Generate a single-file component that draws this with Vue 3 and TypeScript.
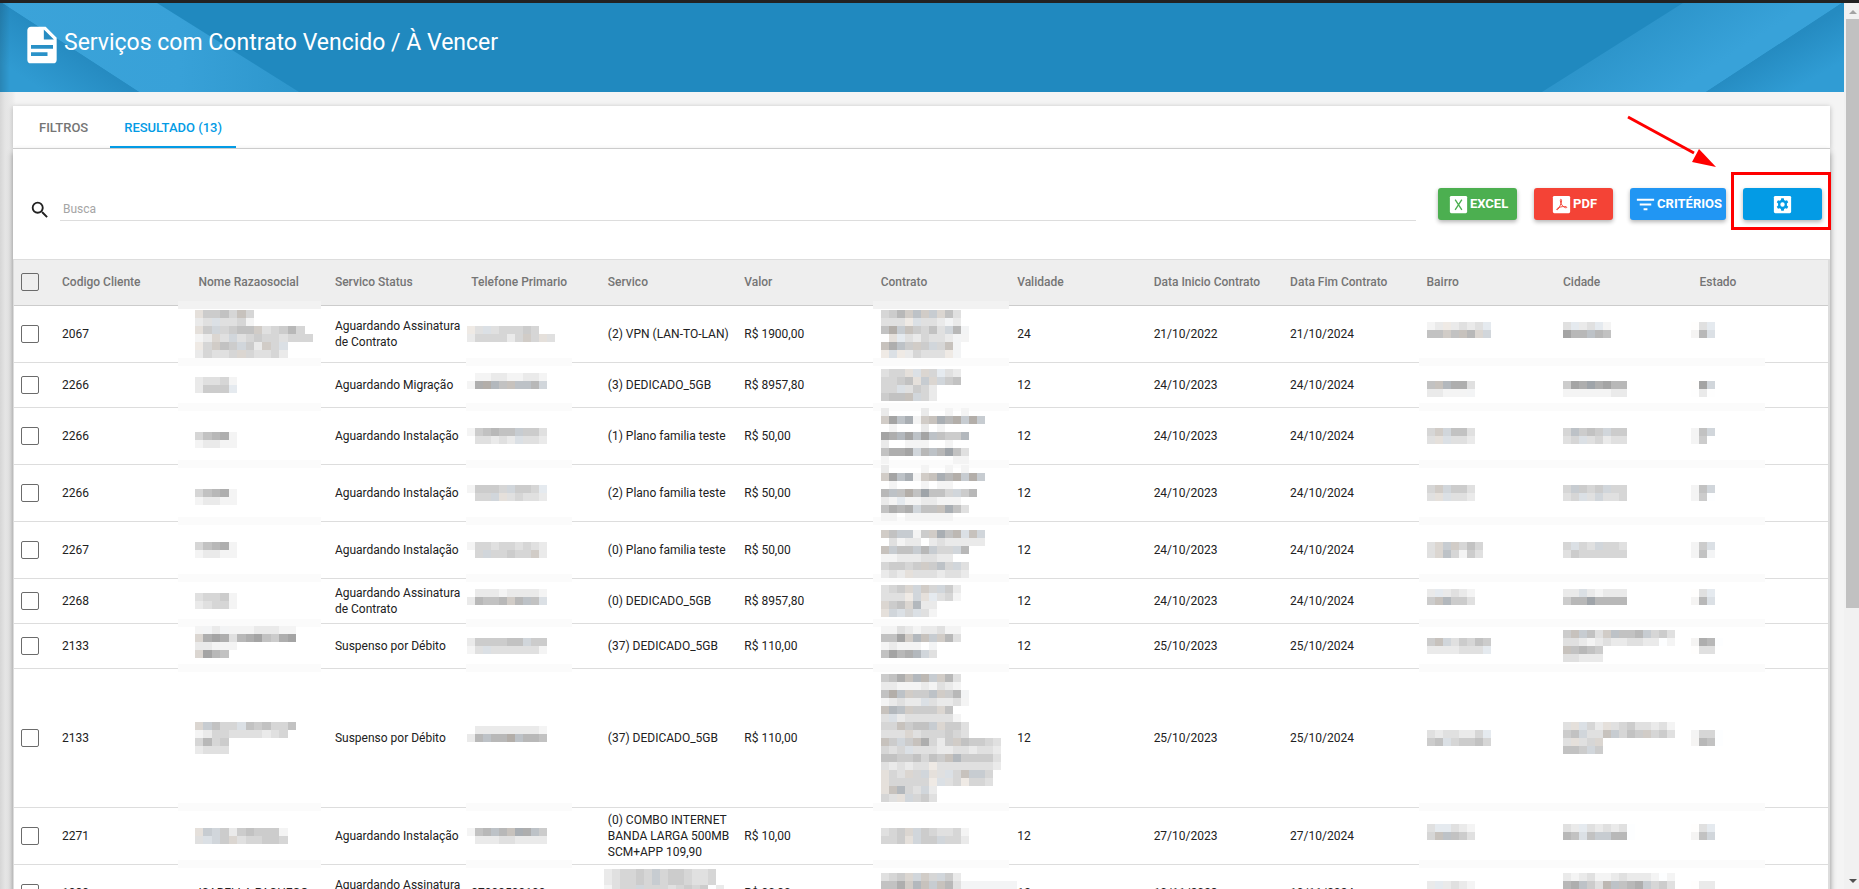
<script setup lang="ts">
import { ref } from 'vue'

type Cell = { text?: string; mosaic?: string[] }
type Row = { size: 'compact' | 'regular' | 'tall'; cells: Cell[] }

const search = ref('')
const activeTab = ref('resultado')

const columns = [
  'Codigo Cliente', 'Nome Razaosocial', 'Servico Status', 'Telefone Primario', 'Servico', 'Valor', 'Contrato',
  'Validade', 'Data Inicio Contrato', 'Data Fim Contrato', 'Bairro', 'Cidade', 'Estado',
]
const columnKeys = [
  'codigo', 'nome', 'status', 'telefone', 'servico', 'valor', 'contrato',
  'validade', 'inicio', 'fim', 'bairro', 'cidade', 'estado',
]

const t = (text: string): Cell => ({ text })
const m = (pattern: string): Cell => ({ mosaic: pattern.split('/') })

/* Digits are neutral greys (0 lightest), a-j warm greys, A-J cool greys, a dot is empty. */
function shade(code: string): string {
  let level = 0
  let tint = 0
  if (code >= '0' && code <= '9') level = Number(code)
  else if (code >= 'a' && code <= 'j') {
    level = code.charCodeAt(0) - 97
    tint = 1
  } else {
    level = code.charCodeAt(0) - 65
    tint = -1
  }
  const g = 254 - level * 10
  const span = level > 1 ? 5 : 1
  return `rgb(${g + tint * span}, ${g}, ${g - tint * span})`
}

/* The name column is censored with slightly wider blocks than the others. */
const edge = (index: number, key: string) => (key === 'nome' ? Math.round((index * 59) / 7) : index * 8)

function blocks(pattern: string[], key: string) {
  return pattern.flatMap((line, y) =>
    [...line]
      .map((code, x) => ({ code, x: edge(x, key), y: y * 8, width: edge(x + 1, key) - edge(x, key) }))
      .filter((b) => b.code !== '.')
      .map((b) => ({ x: b.x, y: b.y, width: b.width, fill: shade(b.code) })),
  )
}
const mosaicWidth = (pattern: string[], key: string) => edge(Math.max(...pattern.map((line) => line.length)), key)

const rows: Row[] = [
  { size: 'regular', cells: [
    t('2067'), m('d5564g4/23D3341/d5E4566f34574/12e3E345443444/c4f65E52f4D/24334e43342'), t('Aguardando Assinatura de Contrato'),
    m('c3D344454/2444424f4d3'), t('(2) VPN (LAN-TO-LAN)'), t('R$ 1900,00'),
    m('457fGfFe63/333cD332B2/6iFg5463E7B/0dC324332B1/g8G5f5E4gB/cDc24333cB'), t('24'), t('21/10/2022'), t('21/10/2024'),
    m('12c2323C/66f6g7eE/........'), m('.3C23C1/.977G76/.......'), m('a3C/b7D/...') ] },
  { size: 'compact', cells: [
    t('2266'), m('23341/2555C'), t('Aguardando Migração'),
    m('.112211221/18iH6gGG7E/..........'), t('(3) DEDICADO_5GB'), t('R$ 8957,80'),
    m('344dDe4C32/4456dFeE56/44D3542/566gE42'), t('12'), t('24/10/2023'), t('24/10/2024'),
    m('....../6gH883/22111B'), m('........./.598J8977/.11111122'), m('.../a9E/020') ] },
  { size: 'regular', cells: [
    t('2266'), m('...../46781/12211'), t('Aguardando Instalação'),
    m('156766F553/.33232D332'), t('(1) Plano familia teste'), t('R$ 50,00'),
    m('2....2..1.1../f9GI1fgI7iFiF/.1...2.1...../98H9G9G655H../2..111..1..../6889E7G7J63../1........11..'), t('12'), t('24/10/2023'), t('24/10/2024'),
    m('4fE663/3dD332'), m('.4G565E55/.34D34233'), m('16E/15.') ] },
  { size: 'regular', cells: [
    t('2266'), m('...../46781/12211'), t('Aguardando Instalação'),
    m('15554E554C/.44Ed34332'), t('(2) Plano familia teste'), t('R$ 50,00'),
    m('2....1..1.1../f9GI1fgI7iFiF/.1...1.11..../7G6i6J664E57./21C1122111.../6878E66gI63../11.111111....'), t('12'), t('24/10/2023'), t('24/10/2024'),
    m('4fE553/3dD332'), m('.4F545E44/.34D3E334'), m('16E/15A') ] },
  { size: 'regular', cells: [
    t('2267'), m('46781/12211'), t('Aguardando Instalação'),
    m('1443443432/.4E44544f2'), t('(0) Plano familia teste'), t('R$ 50,00'),
    m('............./f6FF15fI6hDgE/.3122.2322222/gF66F7F44E7../112223322.../45545f5G4E3../232d3332332..'), t('12'), t('24/10/2023'), t('24/10/2024'),
    m('3eFf464/3eG4153'), m('.4D43E443/.35444444'), m('15D/16B') ] },
  { size: 'compact', cells: [
    t('2268'), m('34451/23441'), t('Aguardando Assinatura de Contrato'),
    m('.222122221/27667f7G6D/..........'), t('(0) DEDICADO_5GB'), t('R$ 8957,80'),
    m('345eEf4E52/333cEdC341/e56eH22/dED4D31'), t('12'), t('24/10/2023'), t('24/10/2024'),
    m('2C2321/5gH553/......'), m('.22D21222/.577J7777/.........'), m('a3C/b7D/...') ] },
  { size: 'compact', cells: [
    t('2133'), m('1B2B11122211/e89837896589/22111/e976/............'), t('Suspenso por Débito'),
    m('2555566E55/13D3333331'), t('(37) DEDICADO_5GB'), t('R$ 110,00'),
    m('1132122311/669fHgFf73/12111.B/6978HE3/..........'), t('12'), t('25/10/2023'), t('25/10/2024'),
    m('5gE35465/2222333C'), m('.5gF63fG667F453/.332123223322A1/.g6765/.33222'), m('b87A/a33.') ] },
  { size: 'tall', cells: [
    t('2133'), m('eF644D656446/12443333234/4745/2333'), t('Suspenso por Débito'),
    m('.222222221/27G77iG776/..........'), t('(37) DEDICADO_5GB'), t('R$ 110,00'),
    m('568gHhFf73/2211121321/6iGf55Gf57B/12322D32231/gHGf555e6/3D23333331/44g566Fe553/333e3444543/g5E5g8425f65543/434D33322332332/66556465gH55553/323233c33333332/d43e4Ed3D4gFF4/d44444cD34c443/dgH43E2/43dE453'), t('12'), t('25/10/2023'), t('25/10/2024'),
    m('3233224C/56D45564'), m('.3dD42d34533231/.56E33gF465f453/.3d34e/.665E5'), m('144A/b76A') ] },
  { size: 'regular', cells: [
    t('2271'), m('dFE52565551/3DE5e344554'), t('Aguardando Instalação'),
    m('167G7gI8G5/.222332222'), t('(0) COMBO INTERNET BANDA LARGA 500MB SCM+APP 109,90'), t('R$ 10,00'),
    m('345eE543341/445dE55E442'), t('12'), t('27/10/2023'), t('27/10/2024'),
    m('3CC321/4gG653/......'), m('.32C32323A/.76D6FF77A/..........'), m('a3C/b6E/...') ] },
  { size: 'regular', cells: [
    t('1989'), t('ISABELLA PACHECO'), t('Aguardando Assinatura de Contrato'),
    t('97999599199'), m('234454F4554334/234454F4554334/1344E44434545A2/22d3D3d23332332/22d3D3d23332332/2333322d3323332'),
    t('R$ 90,90'),
    m('345eEf4E52/668fHgFg73BBBBBBB/344D53333/45565445/3444333'), t('12'), t('10/11/2023'), t('10/11/2024'),
    m('2C2321/5gH553/222211'), m('.212311232221A1/.78G53hG678F453/.333222/.76665/.33222'), m('a22/b7D/111') ] },
]
</script>

<template>
  <div class="viewport">
    <div class="page">
      <header class="banner">
        <svg class="ribbon ribbon-left" viewBox="0 0 300 89" aria-hidden="true">
          <defs>
            <linearGradient id="rl" x1="0" y1="0" x2="1" y2="0">
              <stop offset="0" stop-color="#3ba3d9" /><stop offset=".6" stop-color="#38a1d8" /><stop offset="1" stop-color="#2d96cc" />
            </linearGradient>
            <linearGradient id="rt" gradientUnits="userSpaceOnUse" x1="68" y1="44" x2="40" y2="86">
              <stop offset="0" stop-color="#268bc1" /><stop offset="1" stop-color="#309bd2" />
            </linearGradient>
          </defs>
          <path d="M2 0H157L299 89H139Z" fill="url(#rl)" />
          <path d="M0 0H2L139 89H0Z" fill="url(#rt)" />
        </svg>
        <svg class="ribbon ribbon-right" viewBox="0 0 302 89" aria-hidden="true">
          <defs>
            <linearGradient id="rr" gradientUnits="userSpaceOnUse" x1="70" y1="45" x2="110" y2="105">
              <stop offset="0" stop-color="#2d95cb" /><stop offset="1" stop-color="#38a2d9" />
            </linearGradient>
            <linearGradient id="rb" gradientUnits="userSpaceOnUse" x1="232" y1="45" x2="255" y2="85">
              <stop offset="0" stop-color="#258bc1" /><stop offset="1" stop-color="#309cd4" />
            </linearGradient>
          </defs>
          <path d="M141 0H300L164 89H0Z" fill="url(#rr)" />
          <path d="M300 0H302V89H164Z" fill="url(#rb)" />
        </svg>
        <svg class="title-icon" viewBox="0 0 24 24" aria-hidden="true">
          <path fill="#fff" d="M13 9h5.500L13 3.500V9M6 2h8l6 6v12a2 2 0 0 1-2 2H6a2 2 0 0 1-2-2V4c0-1.110.890-2 2-2m9 16v-2H6v2h9m3-4v-2H6v2h12Z" />
        </svg>
        <h1>Serviços com Contrato Vencido / À Vencer</h1>
      </header>

      <main class="card">
        <nav class="tabs" role="tablist">
          <button type="button" role="tab" class="tab" :class="{ active: activeTab === 'filtros' }" :aria-selected="activeTab === 'filtros'" @click="activeTab = 'filtros'">FILTROS</button>
          <button type="button" role="tab" class="tab" :class="{ active: activeTab === 'resultado' }" :aria-selected="activeTab === 'resultado'" @click="activeTab = 'resultado'">RESULTADO (13)</button>
        </nav>

        <section class="panel">
          <div class="toolbar">
            <label class="search-icon" for="busca" aria-label="Busca">
              <svg viewBox="0 0 24 24" aria-hidden="true"><path fill="#212121" d="M9.500 3A6.500 6.500 0 0 1 16 9.500c0 1.610-.590 3.090-1.560 4.230l.270.270h.790l5 5-1.500 1.500-5-5v-.790l-.270-.270A6.516 6.516 0 0 1 9.500 16a6.500 6.500 0 1 1 0-13m0 2C7 5 5 7 5 9.500S7 14 9.500 14 14 12 14 9.500 12 5 9.500 5Z" /></svg>
            </label>
            <input id="busca" v-model="search" class="search" type="text" placeholder="Busca" />
            <div class="actions">
              <button type="button" class="btn excel">
                <svg viewBox="0 0 24 24" aria-hidden="true"><rect x="3" y="3" width="18" height="18" rx="1.500" fill="#fff" /><path d="M8.500 7l7 10.500M15.500 7l-7 10.500" stroke="#4caf50" stroke-width="1.400" fill="none" /></svg>EXCEL
              </button>
              <button type="button" class="btn pdf">
                <svg viewBox="0 0 24 24" aria-hidden="true"><rect x="3" y="3" width="18" height="18" rx="1.500" fill="#fff" /><path d="M11.300 6.500c1.200 0 .8 2.600.2 4.300-.9 2.600-2.600 6.400-4 6.700-1.200.1-.4-1.500 2-2.400 2-.8 5.600-1.400 7.300-.8 1.600.6.2 1.500-1.300.9-2-.8-4.600-4-4.700-6.900 0-1 .1-1.800.5-1.800Z" stroke="#f44336" stroke-width="1" fill="none" /></svg>PDF
              </button>
              <button type="button" class="btn criterios">
                <svg viewBox="0 0 24 24" aria-hidden="true"><path fill="#fff" d="M6 13h12v-2H6m-3-5v2h18V6M10 18h4v-2h-4v2Z" /></svg>CRITÉRIOS
              </button>
              <div class="highlighted">
                <button type="button" class="btn config" aria-label="Configurar colunas">
                  <svg viewBox="0 0 24 24" aria-hidden="true">
                    <rect x="3" y="3" width="18" height="18" rx="1.500" fill="#fff" />
                    <path fill="#039be5" fill-rule="evenodd" d="M10.700 5.500h2.600l.4 1.900 1.200.7 1.800-.6 1.300 2.200-1.400 1.300v2l1.400 1.300-1.300 2.200-1.800-.6-1.200.7-.4 1.900h-2.600l-.4-1.900-1.200-.7-1.800.6L6 14.300 7.400 13v-2L6 9.700l1.300-2.200 1.800.6 1.200-.7ZM12 9.700a2.300 2.300 0 1 0 0 4.600 2.300 2.300 0 0 0 0-4.600Z" />
                  </svg>
                </button>
                <span class="frame"></span>
                <svg class="arrow" viewBox="0 0 100 60" aria-hidden="true">
                  <path d="M8 7L74 43" stroke="#f00" stroke-width="3" />
                  <path d="M96 57L79 39L72 52Z" fill="#f00" />
                </svg>
              </div>
            </div>
          </div>

          <table>
            <colgroup>
              <col class="col-check" />
              <col v-for="key in columnKeys" :key="key" />
            </colgroup>
            <thead>
              <tr>
                <th class="check"><input type="checkbox" aria-label="Selecionar todos" /></th>
                <th v-for="(name, i) in columns" :key="name" scope="col" :class="'h-' + columnKeys[i]">{{ name }}</th>
              </tr>
            </thead>
            <tbody>
              <tr v-for="(row, r) in rows" :key="r" :class="row.size">
                <td class="check"><input type="checkbox" :aria-label="'Selecionar ' + row.cells[0].text" /></td>
                <td v-for="(cell, c) in row.cells" :key="c" :class="cell.mosaic ? 'masked m-' + columnKeys[c] : ''">
                  <svg v-if="cell.mosaic" class="mosaic" :width="mosaicWidth(cell.mosaic, columnKeys[c])" :height="cell.mosaic.length * 8" shape-rendering="crispEdges" aria-hidden="true">
                    <rect v-for="(b, k) in blocks(cell.mosaic, columnKeys[c])" :key="k" :x="b.x" :y="b.y" :width="b.width" height="8" :fill="b.fill" />
                  </svg>
                  <template v-else>{{ cell.text }}</template>
                </td>
              </tr>
            </tbody>
          </table>
        </section>
      </main>
    </div>

    <div class="scrollbar" aria-hidden="true">
      <svg viewBox="0 0 8 5"><path d="M0 5L4 1L8 5Z" fill="#a3a3a3" /></svg>
      <div class="track"><div class="thumb"></div></div>
      <svg viewBox="0 0 8 5"><path d="M0 0L4 4L8 0Z" fill="#505050" /></svg>
    </div>
  </div>
</template>

<style>
body {
  margin: 0;
  overflow: hidden;
}
</style>

<style scoped>
* {
  box-sizing: border-box;
}
.viewport {
  height: 100vh;
  display: grid;
  grid-template-columns: minmax(0, 1fr) 15px;
  border-top: 3px solid #222;
  overflow: hidden;
  font-family: Roboto, "Liberation Sans", sans-serif;
  font-size: 12px;
  line-height: 16px;
  color: #212121;
  background: #f4f4f4;
}
.page {
  min-width: 0;
  overflow: hidden;
  background: linear-gradient(to right, #d6d6d6, #e4e4e4 5px, #ebebeb 12px, #f4f4f4 16px);
}
.banner {
  position: relative;
  display: flex;
  align-items: flex-start;
  height: 89px;
  padding: 20px;
  background: #2089bf;
  overflow: hidden;
}
.banner::after {
  content: "";
  position: absolute;
  inset: 0 auto 0 0;
  width: 10px;
  background: linear-gradient(to right, rgba(0, 0, 0, 0.14), transparent);
}
.ribbon {
  position: absolute;
  top: 0;
  height: 89px;
}
.ribbon-left {
  left: 0;
}
.ribbon-right {
  right: 0;
}
.title-icon {
  position: relative;
  width: 44px;
  height: 44px;
}
h1 {
  position: relative;
  margin: 4px 0 0;
  font-size: 23px;
  line-height: 32px;
  font-weight: 400;
  color: #fff;
}
.card {
  margin: 14px 14px 0 13px;
}
.tabs {
  display: flex;
  gap: 8px;
  height: 42px;
  padding-left: 12px;
  background: #fff;
  box-shadow: 0 1px 5px rgba(0, 0, 0, 0.25);
}
.tab {
  padding: 4px 14px 0;
  border: 0;
  border-bottom: 2px solid transparent;
  background: none;
  font: 500 13px/16px Roboto, "Liberation Sans", sans-serif;
  color: #757575;
}
.tab.active {
  color: #039be5;
  border-color: #039be5;
}
.panel {
  min-height: 800px;
  border-top: 1px solid #ccc;
  background: #fff;
  box-shadow: 0 4px 6px rgba(0, 0, 0, 0.45);
}
.toolbar {
  display: flex;
  align-items: flex-end;
  height: 110px;
  padding: 0 8px 38px 16px;
}
.search-icon {
  width: 31px;
  height: 22px;
}
.search-icon svg {
  display: block;
  width: 22px;
  height: 22px;
}
.search {
  flex: 1;
  min-width: 0;
  height: 24px;
  padding: 0 3px;
  border: 0;
  border-bottom: 1px solid #ddd;
  background: none;
  outline: none;
  font: 400 12px/16px Roboto, "Liberation Sans", sans-serif;
  color: #212121;
}
.search::placeholder {
  color: #a5a5a5;
}
.actions {
  display: flex;
  gap: 17px;
  margin-left: 22px;
  padding-bottom: 1px;
}
.btn {
  display: flex;
  align-items: center;
  justify-content: center;
  min-width: 79px;
  height: 32px;
  padding: 0 4px;
  border: 0;
  border-radius: 3px;
  color: #fff;
  font: 700 13px/16px Roboto, "Liberation Sans", sans-serif;
  box-shadow: 0 2px 4px rgba(0, 0, 0, 0.3);
}
.btn svg {
  width: 23px;
  height: 23px;
}
.excel {
  background: #4caf50;
}
.pdf {
  background: #f44336;
}
.criterios {
  background: #2196f3;
}
.config {
  background: #039be5;
}
.highlighted {
  position: relative;
}
.frame {
  position: absolute;
  top: -16px;
  right: -9px;
  bottom: -10px;
  left: -12px;
  border: 3px solid #f00;
  pointer-events: none;
}
.arrow {
  position: absolute;
  left: -123px;
  top: -78px;
  width: 100px;
  height: 60px;
  pointer-events: none;
}
table {
  width: 100%;
  table-layout: fixed;
  border-collapse: separate;
  border-spacing: 0;
  border: 1px solid #ddd;
  border-right-width: 2px;
  border-bottom: 0;
}
.col-check {
  width: 40px;
}
th,
td {
  position: relative;
  padding: 0 0 0 8px;
  border-bottom: 1px solid #ddd;
  text-align: left;
  vertical-align: middle;
}
th {
  height: 46px;
  padding-bottom: 2px;
  background: #eee;
  border-color: #ccc;
  font-weight: 500;
  color: #757575;
}
.check {
  padding-left: 7px;
}
input[type="checkbox"] {
  display: block;
  appearance: none;
  width: 18px;
  height: 18px;
  margin: 0;
  border: 1px solid #6b6b6b;
  border-radius: 2px;
}
input[type="checkbox"]:checked {
  background: #039be5;
}
.regular td {
  height: 57px;
}
.compact td {
  height: 45px;
}
.tall td {
  height: 139px;
}
.mosaic {
  position: relative;
  z-index: 1;
  display: block;
}
.m-nome .mosaic {
  margin-left: -3px;
}
.m-telefone .mosaic,
.m-servico .mosaic {
  margin-left: -4px;
}
.m-cidade .mosaic,
.m-estado .mosaic {
  margin-left: -8px;
}
.masked::after,
.h-nome::after,
.h-contrato::after {
  content: "";
  position: absolute;
  bottom: -4px;
  height: 8px;
  background: #fbfbfb;
}
.h-nome::after,
.h-contrato::after {
  z-index: 1;
  background: #f2f2f2;
}
.m-nome::after,
.h-nome::after {
  left: -12px;
  width: 143px;
}
.m-telefone::after {
  left: 3px;
  width: 106px;
}
.m-contrato::after,
.h-contrato::after {
  left: 0;
  width: 136px;
}
.m-bairro::after,
.m-cidade::after {
  left: 0;
  width: 100%;
}
.m-estado::after {
  left: 0;
  width: 74px;
}
.scrollbar {
  display: flex;
  flex-direction: column;
  align-items: center;
  padding: 6px 0 5px 2px;
  background: #f1f1f1;
}
.scrollbar svg {
  width: 8px;
  height: 5px;
}
.track {
  flex: 1;
  width: 100%;
  padding: 5px 0 6px;
}
.thumb {
  height: 69%;
  background: #c1c1c1;
}
</style>
